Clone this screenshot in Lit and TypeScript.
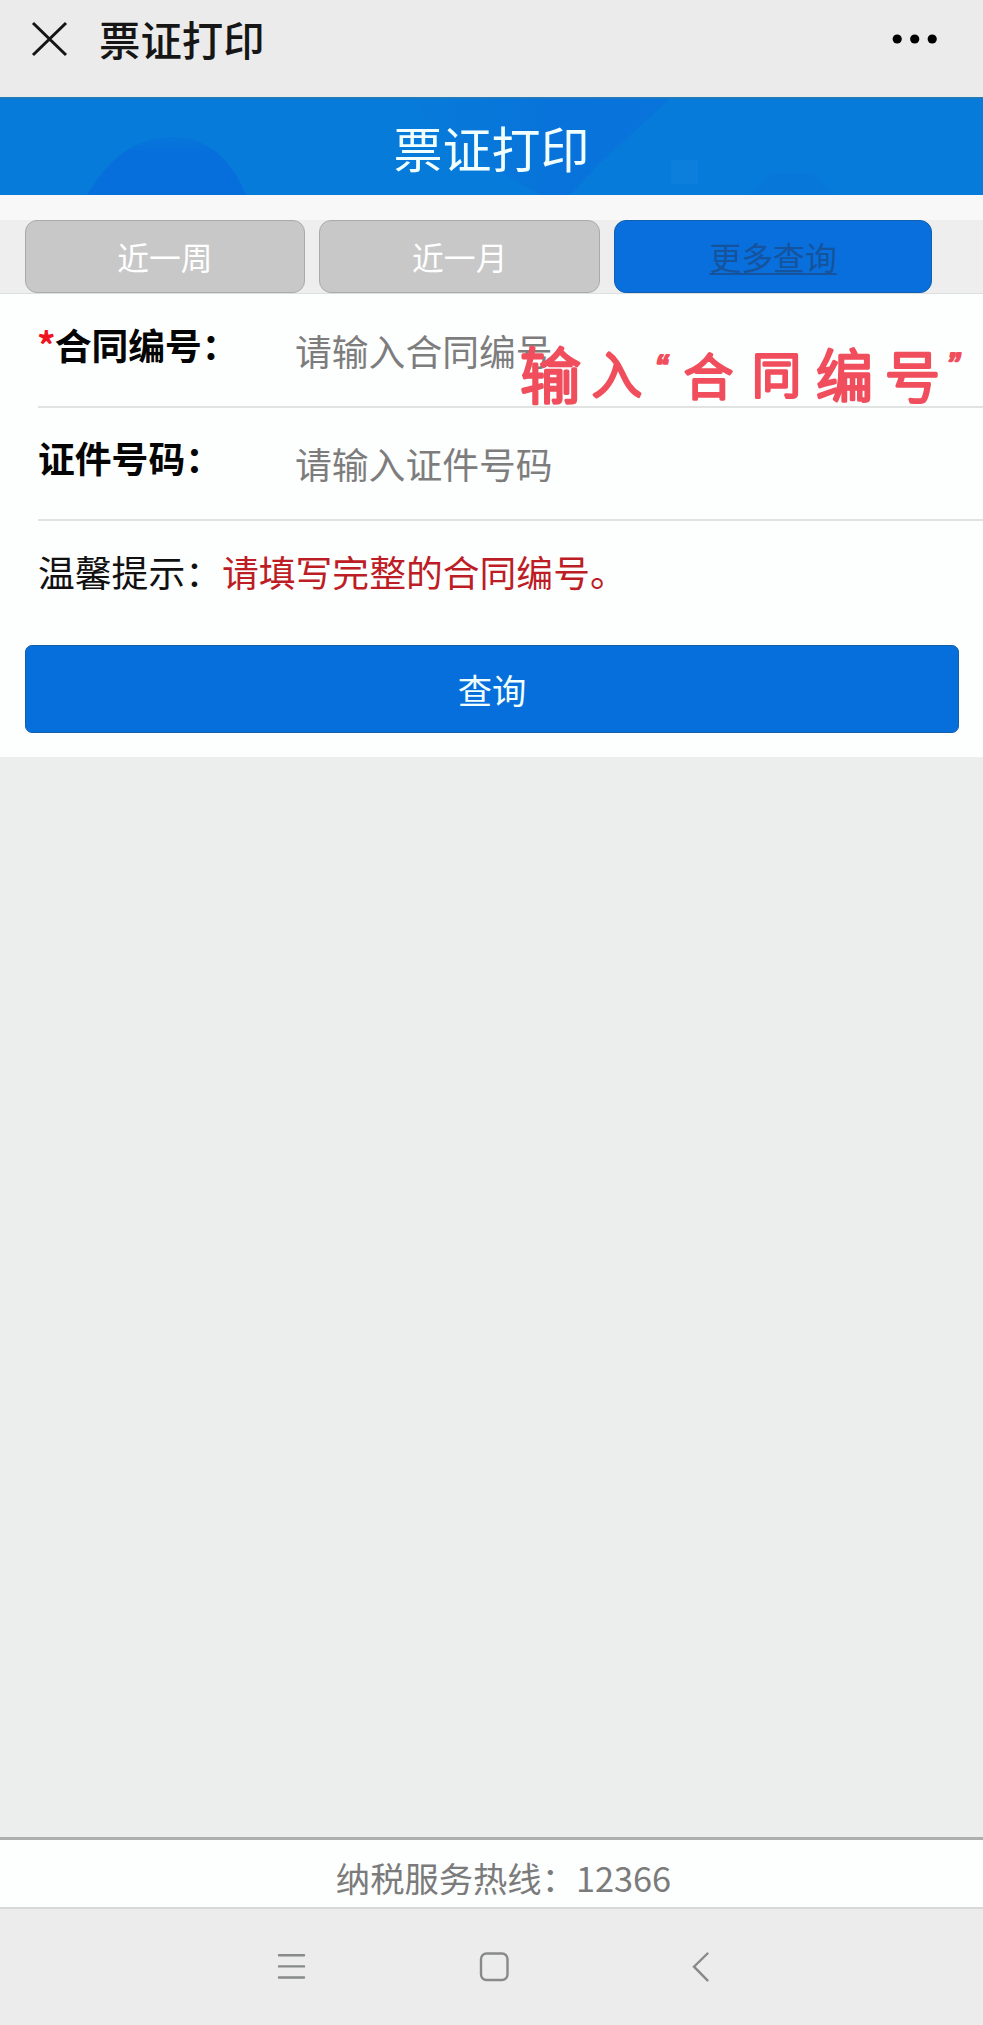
import { LitElement, html, css } from "lit";
import { customElement, property } from "lit/decorators.js";

@customElement("form-row")
class FormRow extends LitElement {
  @property() label = "";
  @property() hint = "";
  @property({ type: Boolean }) required = false;

  static styles = css`
    :host { display: block; margin-left: 38px; }
    .row { display: flex; box-sizing: border-box; height: 113px; border-bottom: 2px solid #e1e2e2; }
    .label { box-sizing: border-box; width: 257px; padding-top: 22px; font-weight: 700; line-height: 54px; white-space: nowrap; color: #050505; }
    .star { color: #f0141e; margin: 0 -1px 0 -1px; }
    .field { flex: 1; min-width: 0; border: 0; padding: 0; margin: 1px 0 0; height: 107px; background: transparent; font: inherit; outline: none; }
    .field::placeholder { color: #7d7d7d; opacity: 1; }
  `;

  render() {
    return html`<div class="row">
      <div class="label">${this.required ? html`<span class="star">*</span>` : ""}${this.label}</div>
      <input class="field" placeholder=${this.hint} />
    </div>`;
  }
}

@customElement("app-root")
class AppRoot extends LitElement {
  static styles = css`
    :host {
      display: flex; flex-direction: column; position: relative; width: 983px; height: 2025px; overflow: hidden;
      background: #eceded; font-family: "Noto Sans CJK SC", sans-serif; font-size: 36.8px; color: #111;
    }
    .bar { display: flex; align-items: center; height: 97px; background: #ebebeb; box-sizing: border-box; padding: 0 45px 19px 31px; flex: none; }
    .name { margin-left: 31px; flex: 1; font-size: 41.4px; font-weight: 500; line-height: 60px; color: #161616; padding-bottom: 3px; }
    .banner { position: relative; flex: none; height: 98px; background: #077bd9; }
    .art { display: block; width: 983px; height: 98px; }
    .title { position: absolute; inset: 0; text-align: center; font-size: 49px; line-height: 99px; color: #f2ffff; }
    .tabs { flex: none; display: flex; height: 73px; gap: 14px; padding: 0 51px 0 24.5px; background: #eeeeef; border-top: 25px solid #f8f8f8; border-bottom: 1px solid #dedfdf; }
    .tab { box-sizing: border-box; width: 281px; height: 73px; border: 1.5px solid #a9abab; border-radius: 12px; background: #c8c8c8; color: #fff; font: inherit; font-size: 31.8px; line-height: 70px; text-align: center; padding: 0 0 2px; }
    .on { width: 318px; border-color: #115fae; background: #086fdc; color: #15539c; text-decoration: underline; text-decoration-thickness: 2px; text-underline-offset: 3px; }
    .form { flex: none; box-sizing: border-box; height: 463px; padding-top: 1px; background: #fdfefe; }
    .tip { margin: 0 0 0 38px; height: 124px; line-height: 101px; white-space: nowrap; }
    .warn { color: #bd1d25; }
    .go { display: block; box-sizing: border-box; width: 934px; height: 88px; margin: 0 0 0 25px; padding: 0; border: 1.5px solid #135fa9; border-radius: 7px; background: #076fdb; color: #f2ffff; font: inherit; font-size: 34.3px; }
    .fill { flex: 1; }
    .hot { flex: none; box-sizing: border-box; height: 72px; padding-left: 24px; background: #fdfefe; border-top: 3px solid #adafaf; border-bottom: 2px solid #d7d8d8; text-align: center; font-size: 34.3px; line-height: 74px; color: #7b7b7b; }
    .nav { flex: none; height: 116px; background: #ebeceb; }
    .keys { display: block; }
    .note { position: absolute; left: 500px; top: 330px; pointer-events: none; }
    .ink { fill: #f14e5d; stroke: #f14e5d; stroke-width: 3.4; stroke-linejoin: round; stroke-linecap: round; font-weight: 300; }
    .mark { font-family: "Liberation Sans", sans-serif; font-size: 37px; font-style: italic; stroke-width: 2.2; }
  `;

  render() {
    return html`
      <div class="bar">
        <svg width="37" height="36" viewBox="0 0 37 36" fill="none" stroke="#151515" stroke-width="3"><path d="M2 2 35 34M35 2 2 34" /></svg>
        <div class="name">票证打印</div>
        <svg width="46" height="10" viewBox="0 0 46 10"><circle cx="5.2" cy="5" r="4.6" /><circle cx="22.7" cy="5" r="4.6" /><circle cx="40.2" cy="5" r="4.6" /></svg>
      </div>
      <div class="banner">
        <svg class="art" viewBox="0 0 983 98">
          <defs>
            <linearGradient id="beam" x1="0" x2="1"><stop offset="0" stop-color="#077bd9" /><stop offset="0.55" stop-color="#0870db" /><stop offset="1" stop-color="#0871dd" /></linearGradient>
            <linearGradient id="disc" x1="0" y1="0" x2="0" y2="1"><stop offset="0" stop-color="#0776db" /><stop offset="0.25" stop-color="#066fdc" /></linearGradient>
          </defs>
          <path d="M410 0H672L600 66 570 98H540L440 40Z" fill="url(#beam)" opacity="0.7" />
          <path d="M87 98C108 62 135 40 172 40S232 64 246 98Z" fill="url(#disc)" />
          <path d="M671 63h27v24h-27z" fill="#1384df" opacity="0.4" />
          <path d="M750 98l22-22h40l22 22z" fill="#0875d8" opacity="0.6" />
          <path d="M0 0.7H983" stroke="#287bb4" stroke-width="1.4" />
        </svg>
        <div class="title">票证打印</div>
      </div>
      <div class="tabs">
        <button class="tab">近一周</button>
        <button class="tab">近一月</button>
        <button class="tab on">更多查询</button>
      </div>
      <div class="form">
        <form-row required label="合同编号：" hint="请输入合同编号"></form-row>
        <form-row label="证件号码：" hint="请输入证件号码"></form-row>
        <div class="tip">温馨提示：<span class="warn">请填写完整的合同编号。</span></div>
        <button class="go">查询</button>
      </div>
      <div class="fill"></div>
      <div class="hot">纳税服务热线：12366</div>
      <div class="nav">
        <svg class="keys" width="983" height="116" viewBox="0 1 983 116" fill="none" stroke="#888989" stroke-width="2.4" stroke-linecap="round">
          <path d="M279 47.3h25M279 58.4h25M279 69.5h25" />
          <rect x="481" y="45.5" width="26.5" height="26.5" rx="5.5" />
          <path d="M707.5 45.5 694 58.7 707.5 72.3" />
        </svg>
      </div>
      <svg class="note" width="483" height="90" viewBox="500 330 483 90">
        <text class="ink" rotate="0"><tspan x="520" y="399" font-size="61">输</tspan><tspan x="592" y="393" font-size="50">入</tspan><tspan class="mark" x="655" y="381">“</tspan><tspan x="684" y="395" font-size="49">合</tspan><tspan x="752" y="393" font-size="49">同</tspan><tspan x="816" y="397" font-size="57">编</tspan><tspan x="885" y="397" font-size="55">号</tspan><tspan class="mark" x="947" y="379">”</tspan></text>
      </svg>
    `;
  }
}
